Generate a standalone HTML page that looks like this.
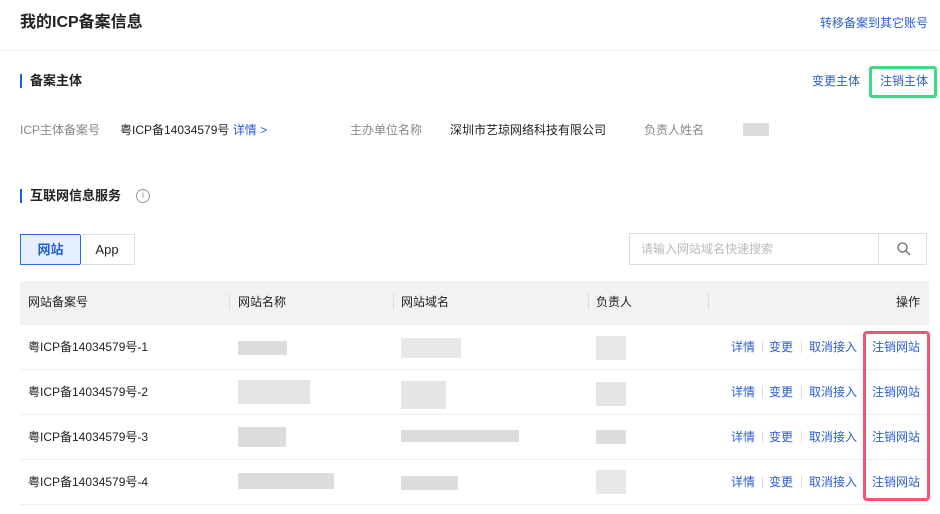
<!DOCTYPE html>
<html><head><meta charset="utf-8"><style>
*{margin:0;padding:0;box-sizing:border-box}
body{width:940px;height:514px;background:#fff;font-family:"Liberation Sans","Noto Sans CJK SC",sans-serif;font-size:12px;color:#222;position:relative;overflow:hidden}
.a{position:absolute;white-space:nowrap;line-height:16px}
.b{color:#2a5ed0}
.g{color:#888}
.bar{position:absolute;left:20px;width:2px;height:14px;background:#1f5fd6}
.blur{position:absolute;background:#ddd}
.sep{position:absolute;width:1px;height:12px;background:#ddd}
</style></head><body>
<div class="a" style="left:20px;top:13px;font-size:16px;line-height:20px;font-weight:bold">我的ICP备案信息</div>
<div class="a b" style="right:12px;top:15px">转移备案到其它账号</div>
<div style="position:absolute;left:0;top:50px;width:940px;height:1px;background:#eee"></div>

<div class="bar" style="top:74px"></div>
<div class="a" style="left:30px;top:73px;font-size:13px;font-weight:bold">备案主体</div>
<div class="a b" style="left:812px;top:73px">变更主体</div>
<div style="position:absolute;left:869px;top:66px;width:68px;height:32px;border:3px solid #3ddc84;border-radius:3px"></div>
<div class="a b" style="left:880px;top:73px">注销主体</div>

<div class="a g" style="left:20px;top:122px">ICP主体备案号</div>
<div class="a" style="left:120px;top:122px">粤ICP备14034579号 <span class="b">详情 &gt;</span></div>
<div class="a g" style="left:350px;top:122px">主办单位名称</div>
<div class="a" style="left:450px;top:122px">深圳市艺琼网络科技有限公司</div>
<div class="a g" style="left:644px;top:122px">负责人姓名</div>
<div class="blur" style="left:743px;top:123px;width:26px;height:13px"></div>

<div class="bar" style="top:189px"></div>
<div class="a" style="left:30px;top:188px;font-size:13px;font-weight:bold">互联网信息服务</div>
<div style="position:absolute;left:136px;top:189px;width:14px;height:14px;border:1px solid #999;border-radius:50%;color:#999;font-size:10px;line-height:12px;text-align:center">i</div>

<div style="position:absolute;left:20px;top:234px;width:61px;height:31px;background:#e6efff;border:1px solid #2a6ee0;color:#1f5fd6;font-weight:bold;font-size:13px;line-height:29px;text-align:center">网站</div>
<div style="position:absolute;left:80px;top:234px;width:55px;height:31px;border:1px solid #ddd;border-left:none;font-size:13px;line-height:29px;text-align:center">App</div>

<div style="position:absolute;left:629px;top:233px;width:298px;height:32px;border:1px solid #ddd"></div>
<div style="position:absolute;left:878px;top:233px;width:1px;height:32px;background:#ddd"></div>
<div class="a" style="left:641px;top:241px;color:#bbb">请输入网站域名快速搜索</div>
<svg style="position:absolute;left:896px;top:241px" width="16" height="16" viewBox="0 0 16 16"><circle cx="6.5" cy="6.5" r="4.5" fill="none" stroke="#666" stroke-width="1.3"/><path d="M10 10L14 14" stroke="#666" stroke-width="1.3"/></svg>

<div style="position:absolute;left:20px;top:281px;width:909px;height:44px;background:#f2f2f2"></div>
<div class="sep" style="left:229px;top:294px;height:16px"></div>
<div class="sep" style="left:393px;top:294px;height:16px"></div>
<div class="sep" style="left:588px;top:294px;height:16px"></div>
<div class="sep" style="left:708px;top:294px;height:16px"></div>
<div class="a" style="left:28px;top:294px">网站备案号</div>
<div class="a" style="left:238px;top:294px">网站名称</div>
<div class="a" style="left:401px;top:294px">网站域名</div>
<div class="a" style="left:596px;top:294px">负责人</div>
<div class="a" style="right:20px;top:294px">操作</div>

<!-- rows -->
<div style="position:absolute;left:20px;top:369px;width:909px;height:1px;background:#eee"></div>
<div style="position:absolute;left:20px;top:414px;width:909px;height:1px;background:#eee"></div>
<div style="position:absolute;left:20px;top:459px;width:909px;height:1px;background:#eee"></div>
<div style="position:absolute;left:20px;top:504px;width:909px;height:1px;background:#eee"></div>

<div class="a" style="left:28px;top:339px">粤ICP备14034579号-1</div>
<div class="a" style="left:28px;top:384px">粤ICP备14034579号-2</div>
<div class="a" style="left:28px;top:429px">粤ICP备14034579号-3</div>
<div class="a" style="left:28px;top:474px">粤ICP备14034579号-4</div>

<div class="blur" style="left:238px;top:341px;width:49px;height:14px"></div>
<div class="blur" style="left:238px;top:380px;width:72px;height:24px;background:#e4e4e4"></div>
<div class="blur" style="left:238px;top:427px;width:48px;height:20px"></div>
<div class="blur" style="left:238px;top:473px;width:96px;height:16px"></div>

<div class="blur" style="left:401px;top:338px;width:60px;height:20px;background:#e8e8e8"></div>
<div class="blur" style="left:401px;top:381px;width:45px;height:28px;background:#e6e6e6"></div>
<div class="blur" style="left:401px;top:430px;width:118px;height:12px"></div>
<div class="blur" style="left:401px;top:476px;width:57px;height:14px"></div>

<div class="blur" style="left:596px;top:336px;width:30px;height:24px;background:#e8e8e8"></div>
<div class="blur" style="left:596px;top:382px;width:30px;height:24px;background:#e4e4e4"></div>
<div class="blur" style="left:596px;top:430px;width:30px;height:14px"></div>
<div class="blur" style="left:596px;top:470px;width:30px;height:24px;background:#e8e8e8"></div>

<div class="a b" style="left:731px;top:339px">详情</div><div class="sep" style="left:762px;top:341px"></div><div class="a b" style="left:769px;top:339px">变更</div><div class="sep" style="left:801px;top:341px"></div><div class="a b" style="left:809px;top:339px">取消接入</div><div class="a b" style="left:872px;top:339px">注销网站</div>
<div class="a b" style="left:731px;top:384px">详情</div><div class="sep" style="left:762px;top:386px"></div><div class="a b" style="left:769px;top:384px">变更</div><div class="sep" style="left:801px;top:386px"></div><div class="a b" style="left:809px;top:384px">取消接入</div><div class="a b" style="left:872px;top:384px">注销网站</div>
<div class="a b" style="left:731px;top:429px">详情</div><div class="sep" style="left:762px;top:431px"></div><div class="a b" style="left:769px;top:429px">变更</div><div class="sep" style="left:801px;top:431px"></div><div class="a b" style="left:809px;top:429px">取消接入</div><div class="a b" style="left:872px;top:429px">注销网站</div>
<div class="a b" style="left:731px;top:474px">详情</div><div class="sep" style="left:762px;top:476px"></div><div class="a b" style="left:769px;top:474px">变更</div><div class="sep" style="left:801px;top:476px"></div><div class="a b" style="left:809px;top:474px">取消接入</div><div class="a b" style="left:872px;top:474px">注销网站</div>

<div style="position:absolute;left:863px;top:331px;width:67px;height:170px;border:3px solid #f0566e;border-radius:4px"></div>
</body></html>
